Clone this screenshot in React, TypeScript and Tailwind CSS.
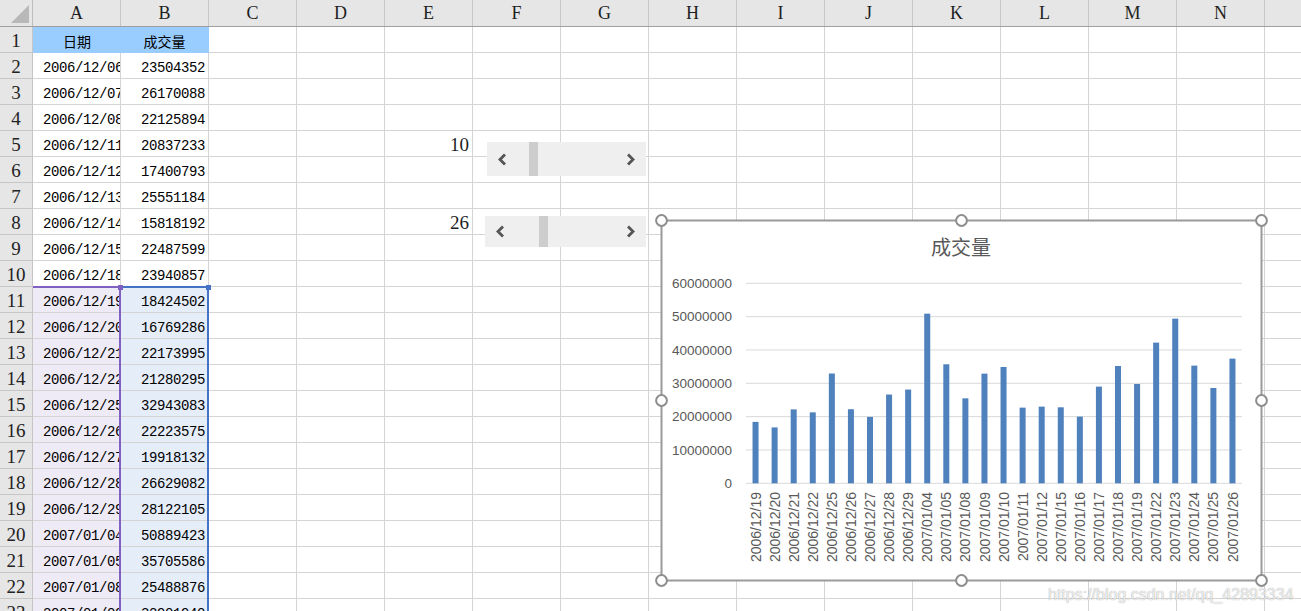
import React from "react";

const COLS = ["A", "B", "C", "D", "E", "F", "G", "H", "I", "J", "K", "L", "M", "N"];

const sheetRows: [string, string][] = [
  ["2006/12/06", "23504352"],
  ["2006/12/07", "26170088"],
  ["2006/12/08", "22125894"],
  ["2006/12/11", "20837233"],
  ["2006/12/12", "17400793"],
  ["2006/12/13", "25551184"],
  ["2006/12/14", "15818192"],
  ["2006/12/15", "22487599"],
  ["2006/12/18", "23940857"],
  ["2006/12/19", "18424502"],
  ["2006/12/20", "16769286"],
  ["2006/12/21", "22173995"],
  ["2006/12/22", "21280295"],
  ["2006/12/25", "32943083"],
  ["2006/12/26", "22223575"],
  ["2006/12/27", "19918132"],
  ["2006/12/28", "26629082"],
  ["2006/12/29", "28122105"],
  ["2007/01/04", "50889423"],
  ["2007/01/05", "35705586"],
  ["2007/01/08", "25488876"],
  ["2007/01/09", "32901940"],
];

const chartData: [string, number][] = [
  ["2006/12/19", 18424502],
  ["2006/12/20", 16769286],
  ["2006/12/21", 22173995],
  ["2006/12/22", 21280295],
  ["2006/12/25", 32943083],
  ["2006/12/26", 22223575],
  ["2006/12/27", 19918132],
  ["2006/12/28", 26629082],
  ["2006/12/29", 28122105],
  ["2007/01/04", 50889423],
  ["2007/01/05", 35705586],
  ["2007/01/08", 25488876],
  ["2007/01/09", 32901940],
  ["2007/01/10", 34900000],
  ["2007/01/11", 22700000],
  ["2007/01/12", 23000000],
  ["2007/01/15", 22800000],
  ["2007/01/16", 20000000],
  ["2007/01/17", 29000000],
  ["2007/01/18", 35200000],
  ["2007/01/19", 29800000],
  ["2007/01/22", 42200000],
  ["2007/01/23", 49400000],
  ["2007/01/24", 35300000],
  ["2007/01/25", 28600000],
  ["2007/01/26", 37400000],
];

const serif = "font-['Liberation_Serif',serif]";
const mono = "font-['Liberation_Mono',monospace]";

function ColumnHeader() {
  return (
    <div className="flex h-[27px] shrink-0 border-b border-[#9f9f9f] bg-[#e6e6e6]">
      <div className="flex w-[33px] shrink-0 items-end justify-end border-r border-[#bdbdbd] pr-[3px] pb-[3px]">
        <svg width="18" height="18" viewBox="0 0 18 18">
          <polygon points="18,0 18,18 0,18" fill="#b8b8b8" />
        </svg>
      </div>
      {COLS.map((c) => (
        <div
          key={c}
          className={`flex w-[88px] shrink-0 items-center justify-center border-r border-[#c6c6c6] pt-[1px] text-[18px] text-[#1e1e1e] ${serif}`}
        >
          {c}
        </div>
      ))}
      <div className="flex-1" />
    </div>
  );
}

function SheetRow({ n }: { n: number }) {
  const data = n >= 2 ? sheetRows[n - 2] : undefined;
  const inRange = n >= 11;
  const eValue = n === 5 ? "10" : n === 8 ? "26" : "";

  return (
    <div className="flex h-[26px] shrink-0">
      <div
        className={`flex w-[33px] shrink-0 items-center justify-center border-r border-b border-[#c6c6c6] bg-[#e6e6e6] pt-[4px] text-[19px] text-[#222] ${serif}`}
      >
        {n}
      </div>

      {n === 1 ? (
        <>
          <div className="flex w-[88px] shrink-0 items-center justify-center bg-[#99ccff] pt-[2px] font-['Noto_Sans_CJK_SC',sans-serif] text-[14px] text-black">
            日期
          </div>
          <div className="flex w-[88px] shrink-0 items-center justify-center border-r border-[#99ccff] bg-[#99ccff] pt-[2px] font-['Noto_Sans_CJK_SC',sans-serif] text-[14px] text-black">
            成交量
          </div>
        </>
      ) : (
        <>
          <div
            className={`flex w-[88px] shrink-0 items-center overflow-hidden border-r border-b border-[#d4d4d4] pt-[5px] pl-[10px] text-[14px] tracking-[-0.4px] whitespace-nowrap text-black ${mono} ${
              inRange ? "bg-[#efebf6]" : "bg-white"
            }`}
          >
            {data?.[0]}
          </div>
          <div
            className={`flex w-[88px] shrink-0 items-center justify-end border-r border-b border-[#d4d4d4] pt-[5px] pr-[3px] text-[14px] tracking-[-0.4px] text-black ${mono} ${
              inRange ? "bg-[#e5edf8]" : "bg-white"
            }`}
          >
            {data?.[1]}
          </div>
        </>
      )}

      {COLS.slice(2).map((c) => (
        <div
          key={c}
          className={`flex w-[88px] shrink-0 items-center justify-end border-r border-b border-[#d4d4d4] pt-[4px] pr-[3px] text-[19px] text-[#1e1e1e] ${serif}`}
        >
          {c === "E" ? eValue : ""}
        </div>
      ))}
      <div className="flex-1 border-b border-[#d4d4d4]" />
    </div>
  );
}

function ScrollControl({
  left,
  top,
  width,
  height,
  thumb,
}: {
  left: string;
  top: string;
  width: string;
  height: string;
  thumb: string;
}) {
  return (
    <div className={`absolute flex items-center justify-between bg-[#efefef] px-[10px] ${left} ${top} ${width} ${height}`}>
      <svg width="11" height="13" viewBox="0 0 11 13">
        <polyline points="8,1.5 3,6.5 8,11.5" fill="none" stroke="#555" strokeWidth="2.8" />
      </svg>
      <div className={`absolute top-0 h-full w-[9px] bg-[#cdcdcd] ${thumb}`} />
      <svg width="11" height="13" viewBox="0 0 11 13">
        <polyline points="3,1.5 8,6.5 3,11.5" fill="none" stroke="#555" strokeWidth="2.8" />
      </svg>
    </div>
  );
}

function VolumeChart() {
  const plotLeft = 91;
  const plotRight = 587;
  const zeroY = 269.3;
  const step = 33.333;
  const slot = (plotRight - plotLeft) / chartData.length;
  const ticks = [0, 1, 2, 3, 4, 5, 6];
  const handles: [number, number][] = [
    [6.5, 6.5],
    [306.5, 6.5],
    [606.5, 6.5],
    [6.5, 186.5],
    [606.5, 186.5],
    [6.5, 366.5],
    [306.5, 366.5],
    [606.5, 366.5],
  ];

  return (
    <svg className="absolute top-[214px] left-[655px]" width="614" height="374" viewBox="0 0 614 374">
      <rect x="6.5" y="6.5" width="600" height="360" fill="#fff" stroke="#9a9a9a" strokeWidth="2" />

      <text
        x="306"
        y="41"
        textAnchor="middle"
        fontSize="20"
        fill="#595959"
        fontFamily="'Noto Sans CJK SC', sans-serif"
      >
        成交量
      </text>

      {ticks.map((t) => {
        const y = zeroY - t * step;
        return (
          <g key={t}>
            <line x1={plotLeft} x2={plotRight} y1={y} y2={y} stroke="#d9d9d9" strokeWidth="1" />
            <text
              x="77"
              y={y}
              dy="0.35em"
              textAnchor="end"
              fontSize="13.5"
              fill="#595959"
              fontFamily="'Liberation Sans', sans-serif"
            >
              {t === 0 ? "0" : `${t}0000000`}
            </text>
          </g>
        );
      })}

      {chartData.map(([label, v], i) => {
        const cx = plotLeft + slot * (i + 0.5);
        const h = (v / 10000000) * step;
        return (
          <g key={label}>
            <rect x={cx - 3} y={zeroY - h} width="6" height={h} fill="#4f81bd" />
            <text
              transform={`translate(${cx} 278) rotate(-90)`}
              dy="0.36em"
              textAnchor="end"
              fontSize="14"
              fill="#595959"
              fontFamily="'Liberation Sans', sans-serif"
            >
              {label}
            </text>
          </g>
        );
      })}

      {handles.map(([x, y]) => (
        <circle key={`${x}-${y}`} cx={x} cy={y} r="5.4" fill="#fff" stroke="#8e8e8e" strokeWidth="2" />
      ))}
    </svg>
  );
}

export default function App() {
  const rows = Array.from({ length: 23 }, (_, i) => i + 1);

  return (
    <div className="relative h-[611px] w-[1301px] overflow-hidden bg-white">
      <div className="flex flex-col">
        <ColumnHeader />
        {rows.map((n) => (
          <SheetRow key={n} n={n} />
        ))}
      </div>

      {/* range highlight for A11:B36 */}
      <div className="absolute top-[286px] left-[33px] h-[340px] w-[88px] border-t-2 border-r-2 border-[#8061c2]" />
      <div className="absolute top-[286px] left-[121px] h-[340px] w-[88px] border-t-2 border-r-2 border-[#4472c4]" />
      <div className="absolute top-[285px] left-[118px] size-[5px] bg-[#8061c2]" />
      <div className="absolute top-[285px] left-[206px] size-[5px] bg-[#4472c4]" />

      <ScrollControl left="left-[487px]" top="top-[142px]" width="w-[159px]" height="h-[34px]" thumb="left-[42px]" />
      <ScrollControl left="left-[485px]" top="top-[216px]" width="w-[161px]" height="h-[31px]" thumb="left-[54px]" />

      <VolumeChart />

      <div className="pointer-events-none absolute top-[583px] left-[1048px] font-['Liberation_Sans',sans-serif] text-[16px] text-white/80 [text-shadow:0_0_1px_rgba(0,0,0,0.45)]">
        https://blog.csdn.net/qq_42893334
      </div>
    </div>
  );
}
